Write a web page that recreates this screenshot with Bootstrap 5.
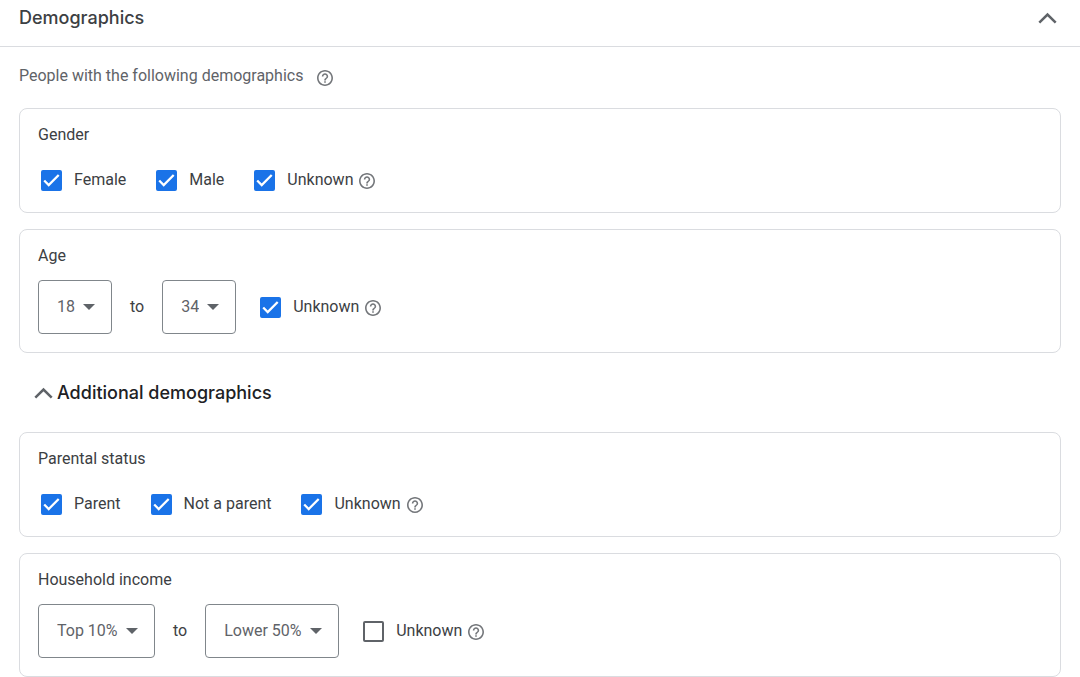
<!DOCTYPE html>
<html lang="en">
<head>
<meta charset="utf-8">
<meta name="viewport" content="width=device-width, initial-scale=1">
<title>Demographics</title>
<link href="https://cdn.jsdelivr.net/npm/bootstrap@5.3.0/dist/css/bootstrap.min.css" rel="stylesheet">
<style>
  body { font-family: Roboto, "Liberation Sans", sans-serif; font-size: 16px; line-height: 24px; color: #3c4043; background: #fff; }
  .title { font-family: Inter, "Open Sans", sans-serif; font-size: 18px; line-height: 24px; font-weight: 500; }
  .panel-head { padding: 6px 19px 16px; border-bottom: 1px solid #dadce0; }
  .panel-main { padding: 17px 19px 0; }
  .muted { color: #5f6368; }
  .icon-btn { color: #5f6368; line-height: 0; padding: 0; border: 0; background: none; }
  .help { color: #74777b; }
  .intro { gap: 14px; margin-bottom: 20px; }
  .intro .help { padding-top: 4px; }
  .panel { border: 1px solid #dadce0; border-radius: 8px; padding: 14px 18px 18px; margin-bottom: 16px; }
  .panel-label { font-size: 16px; line-height: 24px; font-weight: 400; margin-bottom: 12px; }
  .checks { gap: 30px; padding: 9px 3px 2px; }
  .tick { gap: 12px; }
  .tick .form-check-input { width: 21px; height: 21px; margin: 1px 0 0; border: 2px solid #5f6368; border-radius: 2px; background-size: 21px 21px; background-position: center; }
  .tick .form-check-input:checked { background-color: #1a73e8; border-color: #1a73e8; background-image: url("data:image/svg+xml,%3Csvg xmlns='http://www.w3.org/2000/svg' viewBox='0 0 21 21'%3E%3Cpath d='M3.2 10.500l4.500 4.500L17.700 5' fill='none' stroke='%23fff' stroke-width='2.3'/%3E%3C/svg%3E"); }
  .tick .help { margin-left: -6px; padding-top: 1px; }
  .range { gap: 18px; }
  .picker { width: auto; height: 54px; font-size: 16px; line-height: 24px; color: #5f6368; border-color: #80868b; border-radius: 4px; padding: 0 36px 0 18px; background-size: 12px 6px; background-position: right 16px center; background-image: url("data:image/svg+xml,%3Csvg xmlns='http://www.w3.org/2000/svg' viewBox='0 0 12 6'%3E%3Cpath d='M0 0h12L6 6z' fill='%235f6368'/%3E%3C/svg%3E"); }
  .range .tick { margin-left: 6px; }
  .more { color: #202124; gap: 4px; padding: 0; border: 0; background: none; margin: 28px 0 27px 15px; }
  .more svg { color: #5f6368; }
</style>
</head>
<body>
<svg class="d-none" xmlns="http://www.w3.org/2000/svg">
  <symbol id="chevron" viewBox="0 0 19 12"><path d="M1.3 10.700l8.200-8.200 8.200 8.200" fill="none" stroke="currentColor" stroke-width="2.5"/></symbol>
  <symbol id="help" viewBox="2 2 20 20"><path fill="currentColor" d="M11 18h2v-2h-2v2zm1-16C6.480 2 2 6.480 2 12s4.480 10 10 10 10-4.480 10-10S17.520 2 12 2zm0 18c-4.410 0-8-3.590-8-8s3.590-8 8-8 8 3.590 8 8-3.590 8-8 8zm0-14c-2.210 0-4 1.790-4 4h2c0-1.100.9-2 2-2s2 .9 2 2c0 2-3 1.750-3 5h2c0-2.250 3-2.500 3-5 0-2.210-1.790-4-4-4z"/></symbol>
</svg>

<header class="panel-head d-flex align-items-center justify-content-between">
  <h1 class="title m-0">Demographics</h1>
  <button class="icon-btn px-1" type="button" aria-label="Collapse demographics"><svg width="19" height="12"><use href="#chevron"/></svg></button>
</header>

<main class="panel-main">
  <div class="intro d-flex align-items-center muted">
    <span>People with the following demographics</span>
    <button class="icon-btn help" type="button" aria-label="Help on demographics"><svg width="16" height="16"><use href="#help"/></svg></button>
  </div>

  <section class="panel" role="group" aria-labelledby="gender-label">
    <h2 class="panel-label" id="gender-label">Gender</h2>
    <div class="checks d-flex flex-wrap">
      <div class="tick d-flex align-items-center"><input class="form-check-input" type="checkbox" id="female" checked><label for="female">Female</label></div>
      <div class="tick d-flex align-items-center"><input class="form-check-input" type="checkbox" id="male" checked><label for="male">Male</label></div>
      <div class="tick d-flex align-items-center"><input class="form-check-input" type="checkbox" id="gender-unknown" checked><label for="gender-unknown">Unknown</label><button class="icon-btn help" type="button" aria-label="Help on unknown gender"><svg width="16" height="16"><use href="#help"/></svg></button></div>
    </div>
  </section>

  <section class="panel" role="group" aria-labelledby="age-label">
    <h2 class="panel-label" id="age-label">Age</h2>
    <div class="range d-flex flex-wrap align-items-center">
      <select class="form-select picker" aria-label="Youngest age"><option>18</option><option>25</option><option>35</option><option>45</option></select>
      <span>to</span>
      <select class="form-select picker" aria-label="Oldest age"><option>24</option><option selected>34</option><option>44</option><option>54</option></select>
      <div class="tick d-flex align-items-center"><input class="form-check-input" type="checkbox" id="age-unknown" checked><label for="age-unknown">Unknown</label><button class="icon-btn help" type="button" aria-label="Help on unknown age"><svg width="16" height="16"><use href="#help"/></svg></button></div>
    </div>
  </section>

  <button class="more title d-flex align-items-center" type="button" aria-expanded="true"><svg width="19" height="12"><use href="#chevron"/></svg>Additional demographics</button>

  <section class="panel" role="group" aria-labelledby="parental-label">
    <h2 class="panel-label" id="parental-label">Parental status</h2>
    <div class="checks d-flex flex-wrap">
      <div class="tick d-flex align-items-center"><input class="form-check-input" type="checkbox" id="parent" checked><label for="parent">Parent</label></div>
      <div class="tick d-flex align-items-center"><input class="form-check-input" type="checkbox" id="not-parent" checked><label for="not-parent">Not a parent</label></div>
      <div class="tick d-flex align-items-center"><input class="form-check-input" type="checkbox" id="parent-unknown" checked><label for="parent-unknown">Unknown</label><button class="icon-btn help" type="button" aria-label="Help on unknown parental status"><svg width="16" height="16"><use href="#help"/></svg></button></div>
    </div>
  </section>

  <section class="panel mb-0" role="group" aria-labelledby="income-label">
    <h2 class="panel-label" id="income-label">Household income</h2>
    <div class="range d-flex flex-wrap align-items-center">
      <select class="form-select picker" aria-label="Highest income"><option>Top 10%</option><option>11-20%</option><option>21-30%</option></select>
      <span>to</span>
      <select class="form-select picker" aria-label="Lowest income"><option>31-40%</option><option>41-50%</option><option selected>Lower 50%</option></select>
      <div class="tick d-flex align-items-center"><input class="form-check-input" type="checkbox" id="income-unknown"><label for="income-unknown">Unknown</label><button class="icon-btn help" type="button" aria-label="Help on unknown income"><svg width="16" height="16"><use href="#help"/></svg></button></div>
    </div>
  </section>
</main>
<script src="https://cdn.jsdelivr.net/npm/bootstrap@5.3.0/dist/js/bootstrap.bundle.min.js"></script>
</body>
</html>
